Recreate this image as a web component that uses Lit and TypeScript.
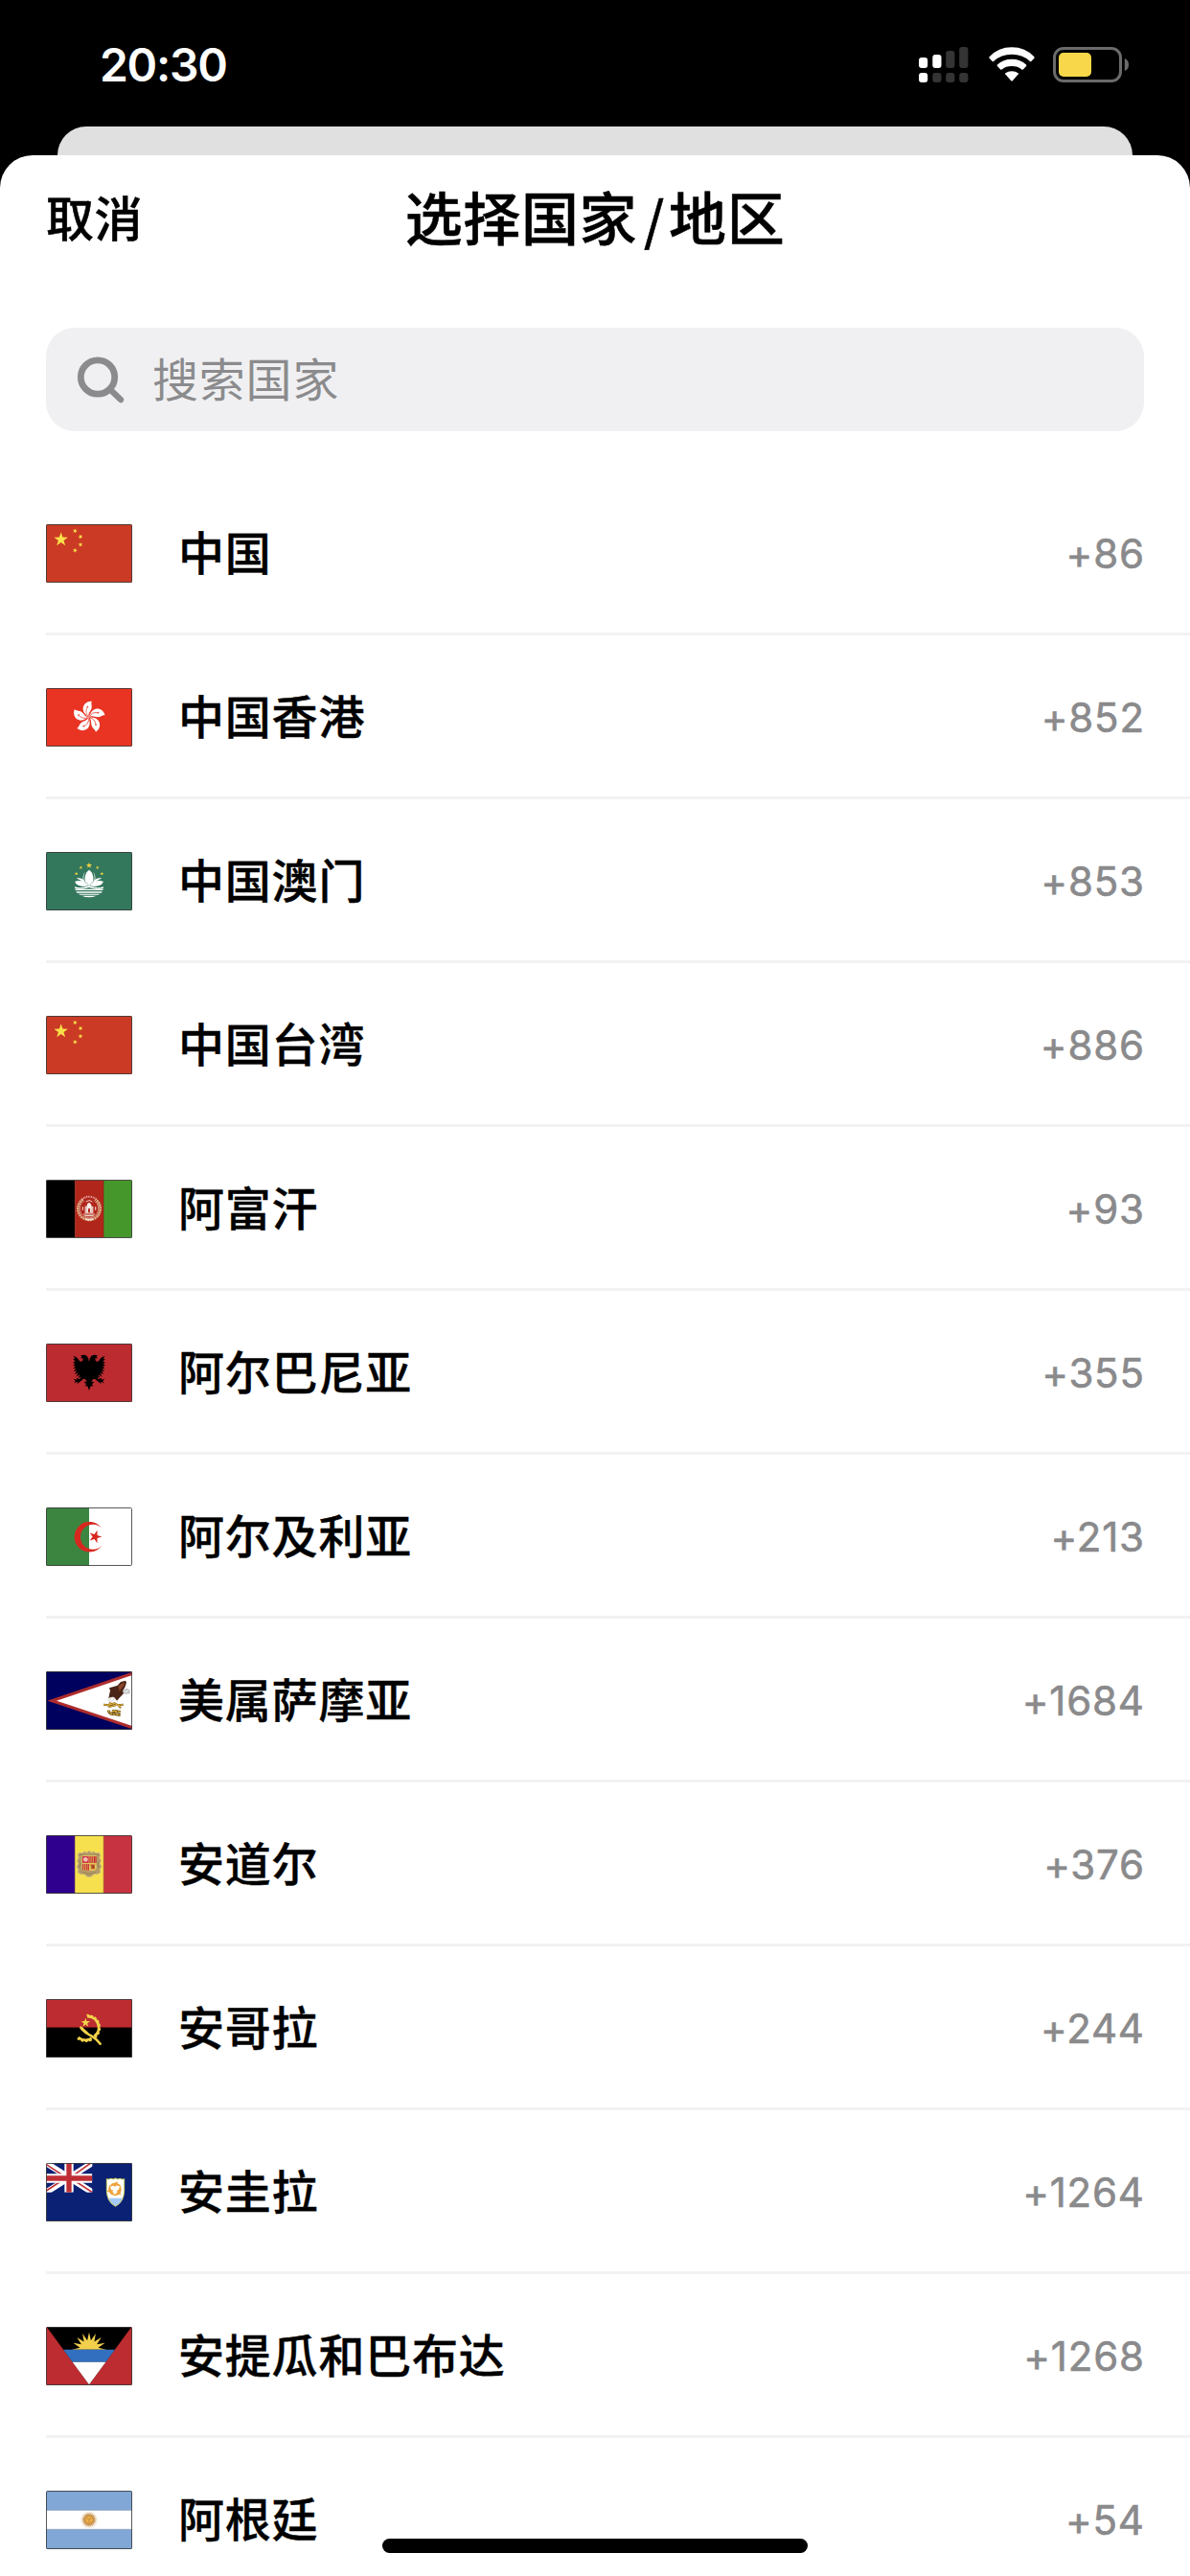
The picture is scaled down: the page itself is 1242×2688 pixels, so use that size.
import { LitElement, html, svg, css } from "lit";
import { customElement, property } from "lit/decorators.js";

type Country = { flag: string; name: string; code: string };

const COUNTRIES: Country[] = [
  { flag: "cn", name: "中国", code: "+86" },
  { flag: "hk", name: "中国香港", code: "+852" },
  { flag: "mo", name: "中国澳门", code: "+853" },
  { flag: "cn", name: "中国台湾", code: "+886" },
  { flag: "af", name: "阿富汗", code: "+93" },
  { flag: "al", name: "阿尔巴尼亚", code: "+355" },
  { flag: "dz", name: "阿尔及利亚", code: "+213" },
  { flag: "as", name: "美属萨摩亚", code: "+1684" },
  { flag: "ad", name: "安道尔", code: "+376" },
  { flag: "ao", name: "安哥拉", code: "+244" },
  { flag: "ai", name: "安圭拉", code: "+1264" },
  { flag: "ag", name: "安提瓜和巴布达", code: "+1268" },
  { flag: "ar", name: "阿根廷", code: "+54" },
];

/** Points of a regular star, first tip at `rot` degrees clockwise from up. */
function star(cx: number, cy: number, r: number, rot = 0, tips = 5, ratio = 0.385): string {
  const pts: string[] = [];
  for (let i = 0; i < tips * 2; i++) {
    const rad = i % 2 === 0 ? r : r * ratio;
    const a = ((rot + (i * 180) / tips - 90) * Math.PI) / 180;
    pts.push(`${(cx + rad * Math.cos(a)).toFixed(1)},${(cy + rad * Math.sin(a)).toFixed(1)}`);
  }
  return pts.join(" ");
}

const EAGLE_HALF =
  "0,60 3,46 8,38 16,35 27,37 23,41 28,46 20,46 20,53 27,57 33,52 37,45 50,38 45,47 51,49 44,55 51,60 44,63 51,69 43,71 50,79 41,78 49,88 39,85 46,97 35,91 41,104 30,97 34,109 26,103 30,112 40,107 38,113 50,110 43,117 48,124 37,119 38,126 29,119 18,110 12,112 8,119 17,120 9,127 14,133 6,133 0,146";

const HK_PETAL = "M0 0C-7-7-19-14-18-29C-16-42-5-51 10-50C5-44 12-37 8-26C5-17-3-13 0 0Z";

function artwork(id: string) {
  switch (id) {
    case "cn":
      return svg`
        <rect width="270" height="183" fill="#ca3a24"/>
        <g fill="#fae04a">
          <polygon points=${star(47, 48, 23)} />
          <polygon points=${star(91, 21, 8, 20)} />
          <polygon points=${star(108, 39, 8, 45)} />
          <polygon points=${star(108, 64, 8, 0)} />
          <polygon points=${star(91, 82, 8, 20)} />
        </g>`;
    case "hk":
      return svg`
        <rect width="270" height="183" fill="#e93323"/>
        <g transform="translate(134 91)">
          ${[0, 72, 144, 216, 288].map(
            (a) => svg`<g transform="rotate(${a})">
              <path d=${HK_PETAL} fill="#fff"/>
              <path d="M-1-3C-9-10-10-20-5-30" fill="none" stroke="#e93323" stroke-width="2"/>
              <polygon points=${star(-4, -32, 4.5)} fill="#e93323"/>
            </g>`
          )}
        </g>`;
    case "mo":
      return svg`
        <rect width="270" height="183" fill="#33775d"/>
        <g fill="#f3d543">
          <polygon points=${star(135, 42, 10)} />
          <polygon points=${star(109, 49, 6)} />
          <polygon points=${star(161, 49, 6)} />
          <polygon points=${star(95, 68, 6)} />
          <polygon points=${star(175, 68, 6)} />
        </g>
        <g fill="#fff">
          <path d="M135 56C122 65 121 80 122 92L135 106L148 92C149 80 148 65 135 56Z"/>
          <path d="M122 62C117 72 117 84 120 96L131 104C116 100 110 78 122 62Z"/>
          <path d="M148 62C153 72 153 84 150 96L139 104C154 100 160 78 148 62Z"/>
          <path d="M95 83C107 80 117 84 123 95L132 105C116 96 110 86 95 83Z"/>
          <path d="M175 83C163 80 153 84 147 95L138 105C154 96 160 86 175 83Z"/>
          <path d="M90 93C104 86 120 90 133 105C114 111 97 107 90 93Z"/>
          <path d="M180 93C166 86 150 90 137 105C156 111 173 107 180 93Z"/>
          <path d="M91 109C104 114 118 112 135 105C152 112 166 114 179 109L180 114Q160 119 135 111Q110 119 90 114Z"/>
          <path d="M91 116H179L178 120H92ZM94 124H176L174 128H97ZM102 131H168L164 134.500H106ZM112 137H158Q147 142 135 142Q122 142 112 137Z"/>
        </g>`;
    case "af":
      return svg`
        <rect width="91" height="183" fill="#000"/>
        <rect x="91" width="89" height="183" fill="#b1261b"/>
        <rect x="180" width="90" height="183" fill="#45972b"/>
        <path d="M91 0V183M180 0V183" stroke="#8c1e14" stroke-width="2"/>
        <g transform="translate(135 91)" fill="none">
          <path d="M-20-29A35 35 0 1 0 20-29" stroke="#dfb188" stroke-width="8" stroke-dasharray="6 1.500"/>
          <path d="M-16-25A29 29 0 1 0 16-25" stroke="#f5e6da" stroke-width="2.500" stroke-dasharray="4 2"/>
          <path d="M-22-30Q0-46 22-30" stroke="#e9a6a0" stroke-width="6" stroke-dasharray="3 2"/>
          <path d="M-10-22Q0-31 10-22" stroke="#f0c5c0" stroke-width="3"/>
          <path d="M-13 13V-8H-8Q-7-17 0-20Q7-17 8-8H13V13Z" fill="#f6eae6"/>
          <path d="M-3 12V1Q0-4 3 1V12Z" fill="#b1261b"/>
          <path d="M-9-7V11M9-7V11" stroke="#b1261b" stroke-width="1.200"/>
          <path d="M-20-6V4M20-6V4M-18 17H18M-14 22H14" stroke="#efd0bd" stroke-width="3.500"/>
          <path d="M-12 31Q0 37 12 31" stroke="#f5e6da" stroke-width="5"/>
        </g>
        <path d="M0 .8H270M0 182.200H270" stroke="#ddd" stroke-width="2.500"/>`;
    case "al":
      return svg`
        <rect width="270" height="183" fill="#bb2b30"/>
        <polygon points=${EAGLE_HALF} transform="translate(134.500 0)"/>
        <polygon points=${EAGLE_HALF} transform="translate(135.500 0) scale(-1 1)"/>`;
    case "dz":
      return svg`
        <rect width="270" height="183" fill="#fff"/>
        <rect width="135" height="183" fill="#3c8541"/>
        <path d="M175 65A47.300 47.300 0 1 0 175 119A39 39 0 1 1 175 65Z" fill="#d7281f"/>
        <polygon points=${star(154, 91.5, 21, 90)} fill="#d7281f"/>`;
    case "as":
      return svg`
        <rect width="270" height="183" fill="#00005e"/>
        <path d="M4 92L270 2V181Z" fill="#ad2c2c"/>
        <path d="M33 92L270 12V171Z" fill="#fff"/>
        <path d="M196 84L201 60L198 52L212 48L224 44L234 33L249 29L252 35L247 50L241 59L247 64L240 73L231 82L222 92L216 84L209 81Z" fill="#4a2418"/>
        <path d="M226 46L246 33L243 46L230 62Z" fill="#8a4529"/>
        <path d="M240 61L254 55L262 61L261 68L248 70L241 66Z" fill="#ddd" stroke="#777" stroke-width="1.500"/>
        <path d="M198 83L209 80L216 83L210 91L204 98L197 94L195 89Z" fill="#f2f0ee" stroke="#aaa" stroke-width="1"/>
        <path d="M180 104L196 106L203 98M194 106L214 100L226 106L242 104M196 111L218 106M226 104L234 115" fill="none" stroke="#5a4210" stroke-width="6"/>
        <path d="M180 104L196 106L203 98M194 106L214 100L226 106L242 104M196 111L218 106M226 104L234 115" fill="none" stroke="#e3b23b" stroke-width="3.500"/>
        <path d="M195 122Q198 135 213 134L233 137M207 123L219 128M215 124L233 127" fill="none" stroke="#5a4210" stroke-width="8"/>
        <path d="M195 122Q198 135 213 134L233 137M207 123L219 128M215 124L233 127" fill="none" stroke="#e3b23b" stroke-width="4" stroke-dasharray="8 2"/>`;
    case "ad":
      return svg`
        <rect width="91" height="183" fill="#2f008e"/>
        <rect x="91" width="89" height="183" fill="#f6e04e"/>
        <rect x="180" width="90" height="183" fill="#c73340"/>
        <path d="M91 0V183M180 0V183" stroke="#b8902f" stroke-width="2"/>
        <path d="M104 55L115 57L120 51L128 55L135 49L142 55L150 51L155 57L166 55L170 63L167 70L172 80L168 88L173 98L168 108L170 117L160 122L150 121L144 128L135 131L126 128L120 121L110 122L100 117L102 108L97 98L102 88L98 80L103 70L100 63Z" fill="#b39a66" stroke="#c9b482" stroke-width="3" stroke-linejoin="round"/>
        <path d="M105 62Q114 60 119 58M165 62Q156 60 151 58M103 82L108 90L104 102M167 82L162 90L166 102M115 116Q135 126 155 116" fill="none" stroke="#927c4b" stroke-width="2.500"/>
        <path d="M112 64H158V103Q158 110 148 111H122Q112 110 112 103Z" fill="#e3c45c"/>
        <rect x="114" y="66" width="20" height="21" fill="#d2344f"/>
        <circle cx="124" cy="76" r="7" fill="#f0c3b0"/>
        <path d="M138 66V87M144.500 66V87M151 66V87M156 66V87" stroke="#c32d37" stroke-width="4"/>
        <path d="M116 90V109M122 90V110M128 90V110M133 90V110" stroke="#c32d37" stroke-width="3.500"/>
        <path d="M139 94H153M141 103H153" stroke="#c1552b" stroke-width="5"/>
        <path d="M147 96V101" stroke="#8f3b1c" stroke-width="9"/>`;
    case "ao":
      return svg`
        <rect width="270" height="183" fill="#000"/>
        <rect width="270" height="89" fill="#bc2c30"/>
        <path d="M0 89.500H270" stroke="#511" stroke-width="2"/>
        <g fill="none" stroke="#f3d24a">
          <path d="M129 54A35 35 0 0 1 151 117M143 123A38 38 0 0 1 101 120" stroke-width="8.500"/>
          <path d="M127 50A40 40 0 0 1 154 121M143 128A43 43 0 0 1 98 123" stroke-width="5" stroke-dasharray="8 5"/>
          <path d="M109 89Q120 103 143 116Q160 126 170 140" stroke-width="7.500" stroke-linecap="round"/>
          <path d="M110 90L128 107" stroke-width="9"/>
        </g>
        <polygon points=${star(124, 74, 15)} fill="#f6d64c"/>`;
    case "ai":
      return svg`
        <rect width="270" height="183" fill="#0b2174"/>
        <svg width="145" height="92" viewBox="0 0 145 92">
          <path d="M0 0L145 92M145 0L0 92" stroke="#fff" stroke-width="19"/>
          <path d="M0 4L64 46M0 88L60 48M145 -3L84 40M81 50L145 92" stroke="#c02e35" stroke-width="5"/>
          <path d="M72 0V92M0 48H145" stroke="#fff" stroke-width="28"/>
          <path d="M72 0V92M0 48H145" stroke="#c02e35" stroke-width="16"/>
        </svg>
        <path d="M190 50Q197 53 203 49Q210 53 217.500 48Q225 53 232 49Q238 53 245 50V88Q244 120 217.500 136Q191 120 190 88Z" fill="#fff"/>
        <path d="M193 110H242Q235 127 217.500 136Q200 127 193 110Z" fill="#a5c9fa"/>
        <path d="M190 50Q197 53 203 49Q210 53 217.500 48Q225 53 232 49Q238 53 245 50V88Q244 120 217.500 136Q191 120 190 88Z" fill="none" stroke="#c9cf5b" stroke-width="3"/>
        <g fill="#eda23b" transform="translate(216 82)">
          ${[0, 120, 240].map(
            (a) => svg`<path transform="rotate(${a})" d="M-16-8Q-12-21 1-20L7-25L8-18Q17-15 20-6Q10-12 2-11L2-6L-4-11Q-11-10-16-8Z"/>`
          )}
        </g>`;
    case "ag":
      return svg`
        <rect width="270" height="183" fill="#bc2c30"/>
        <path d="M2 0H268L135 181Z" fill="#000"/>
        <svg width="270" height="71" viewBox="0 0 270 71">
          <polygon points=${star(135, 71, 54, 0, 16, 0.54)} fill="#f2d04c"/>
        </svg>
        <path d="M54.200 71H215.800L187.200 110H82.800Z" fill="#3270bf"/>
        <path d="M82.800 110H187.200L135 181Z" fill="#fff"/>`;
    default:
      return svg`
        <rect width="270" height="183" fill="#80a7d5"/>
        <rect y="61" width="270" height="60" fill="#fff"/>
        <path d="M0 61H270M0 121H270" stroke="#849bb5" stroke-width="2"/>
        <polygon points=${star(135, 91, 28, 0, 24, 0.66)} fill="#e2c7a4"/>
        <polygon points=${star(135, 91, 21, 7, 16, 0.8)} fill="#d3a267"/>
        <circle cx="135" cy="91" r="13" fill="#eeb24a" stroke="#b07a3c" stroke-width="2.500"/>
        <path d="M128 87H133M137 87H142M131 97H139M135 88V93" stroke="#a06a2c" stroke-width="2"/>`;
  }
}

@customElement("country-flag")
class CountryFlag extends LitElement {
  @property() code = "";

  static styles = css`
    :host {
      display: block;
      flex: none;
      width: 90px;
      height: 61px;
    }
    .flag {
      display: block;
      width: 90px;
      height: 61px;
      border-radius: 1.5px;
    }
  `;

  render() {
    return html`<svg class="flag" viewBox="0 0 270 183" aria-hidden="true">
      ${artwork(this.code)}
      <rect x="1.500" y="1.500" width="267" height="180" rx="2" fill="none" stroke="#3c3c3c" stroke-opacity=".85" stroke-width="3" />
    </svg>`;
  }
}

@customElement("status-bar")
class StatusBar extends LitElement {
  static styles = css`
    :host {
      display: flex;
      justify-content: space-between;
      align-items: flex-start;
      box-sizing: border-box;
      height: 132px;
      padding: 49px 63px 0 104px;
      color: #fff;
    }
    .time {
      margin-top: -10px;
      font: 600 48px/58px Inter, "Liberation Sans", sans-serif;
      letter-spacing: -1.3px;
    }
    .icons {
      display: flex;
    }
    .icons svg {
      display: block;
    }
    .signal {
      margin-right: 21px;
    }
    .wifi {
      margin-right: 19px;
    }
  `;

  render() {
    return html`
      <div class="time">20:30</div>
      <div class="icons">
        <svg class="signal" width="52" height="37" viewBox="0 0 52 37">
          <g fill="#fff">
            <rect x="0" y="11" width="9.200" height="11" rx="3" />
            <rect x="14.300" y="8" width="9.200" height="14" rx="3" />
            <rect x="0" y="27" width="9.200" height="10" rx="3" />
          </g>
          <g fill="#343434">
            <rect x="28.200" y="4" width="9.200" height="18" rx="3" />
            <rect x="42.200" y="0" width="9.200" height="22" rx="3" />
            <rect x="14.300" y="27" width="9.200" height="10" rx="3" />
            <rect x="28.200" y="27" width="9.200" height="10" rx="3" />
            <rect x="42.200" y="27" width="9.200" height="10" rx="3" />
          </g>
        </svg>
        <svg class="wifi" width="48" height="37" viewBox="0 0 48 37">
          <g fill="#fff">
            <path d="M.6 10.200Q10 .3 24 .3Q38 .3 47.400 10.200Q48 11 47.400 11.700L44.300 14.900Q43.700 15.500 43 14.900Q35 7.800 24 7.800Q13 7.800 5 14.900Q4.300 15.500 3.700 14.900L.6 11.700Q0 11 .6 10.200Z" />
            <path d="M8.900 18.600Q15 12.700 24 12.700Q33 12.700 39.100 18.600Q39.700 19.300 39.100 20L35.800 23.400Q35.100 24 34.400 23.400Q30.300 20 24 20Q17.700 20 13.600 23.400Q12.900 24 12.200 23.400L8.900 20Q8.300 19.300 8.900 18.600Z" />
            <path d="M17.400 27.200Q20 25.200 24 25.200Q28 25.200 30.600 27.200Q31.300 27.900 30.700 28.600L24.800 35.200Q24 36 23.200 35.200L17.300 28.600Q16.700 27.900 17.400 27.200Z" />
          </g>
        </svg>
        <svg class="battery" width="80" height="37" viewBox="0 0 80 37">
          <rect x="1.500" y="1.500" width="69" height="34" rx="9.500" fill="none" stroke="#6b6b6b" stroke-width="3" />
          <rect x="6" y="6" width="34" height="25" rx="5" fill="#f8d74a" />
          <path d="M74.800 12Q79 13.500 79 18.500Q79 23.500 74.800 25Z" fill="#6b6b6b" />
        </svg>
      </div>
    `;
  }
}

@customElement("app-root")
class AppRoot extends LitElement {
  static styles = css`
    :host {
      display: block;
      position: relative;
      width: 1242px;
      height: 2688px;
      overflow: hidden;
      background: #000;
      color: #000;
      font-family: "Noto Sans CJK SC", "Noto Sans CJK TC", sans-serif;
    }
    .behind {
      height: 30px;
      margin: 0 60px;
      border-radius: 30px 30px 0 0;
      background: #e0e0e0;
    }
    .sheet {
      height: 2526px;
      overflow: hidden;
      border-radius: 34px 34px 0 0;
      background: #fff;
    }
    .header {
      display: grid;
      grid-template-columns: 1fr auto 1fr;
      align-items: center;
      box-sizing: border-box;
      height: 180px;
      padding: 0 48px 54px;
    }
    .cancel {
      font-size: 50px;
      font-weight: 500;
      line-height: 70px;
      letter-spacing: 0.5px;
      -webkit-text-stroke: 0.5px #000;
    }
    .title {
      margin: 0;
      font-size: 60px;
      font-weight: 500;
      line-height: 80px;
      letter-spacing: 0.6px;
      white-space: nowrap;
      -webkit-text-stroke: 0.5px #000;
    }
    .slash {
      display: inline-block;
      box-sizing: border-box;
      width: 33px;
      padding-left: 3px;
      font-size: 55px;
      line-height: 60px;
      text-align: center;
    }
    .search {
      display: flex;
      align-items: center;
      box-sizing: border-box;
      height: 108px;
      margin: 0 48px;
      padding-left: 31px;
      border-radius: 30px;
      background: #f0f0f2;
      color: #8b8b8d;
      font-size: 48px;
      letter-spacing: 0.8px;
    }
    .glass {
      display: block;
      margin-right: 29px;
    }
    .hint {
      padding-bottom: 6px;
      line-height: 64px;
    }
    .list {
      margin: 42px 0 0;
      padding: 0;
      list-style: none;
    }
    .row {
      display: flex;
      align-items: center;
      box-sizing: border-box;
      height: 171px;
      margin-left: 48px;
      padding: 3px 48px 0 0;
      border-bottom: 3px solid #f2f2f4;
    }
    .name {
      flex: 1;
      margin-left: 48px;
      padding-bottom: 7px;
      font-size: 48px;
      font-weight: 500;
      line-height: 64px;
      letter-spacing: 0.8px;
      -webkit-text-stroke: 0.4px #000;
    }
    .code {
      margin-right: -0.8px;
      color: #8a8a8c;
      font: 400 42px/50px Inter, "Liberation Sans", sans-serif;
      letter-spacing: 0.8px;
      -webkit-text-stroke: 0.6px #8a8a8c;
    }
    .home {
      position: absolute;
      left: 399px;
      top: 2649px;
      width: 444px;
      height: 15px;
      border-radius: 8px;
      background: #000;
    }
  `;

  render() {
    return html`
      <status-bar></status-bar>
      <div class="behind"></div>
      <main class="sheet">
        <header class="header">
          <span class="cancel">取消</span>
          <h1 class="title">选择国家<span class="slash">/</span>地区</h1>
        </header>
        <div class="search">
          <svg class="glass" width="51" height="51" viewBox="0 0 51 51">
            <g fill="none" stroke="#8b8b8d">
              <circle cx="23" cy="22.500" r="17.700" stroke-width="6.800" />
              <path d="M36 35.500L47 46" stroke-width="6.400" stroke-linecap="round" />
            </g>
          </svg>
          <span class="hint">搜索国家</span>
        </div>
        <ul class="list">
          ${COUNTRIES.map(
            (c) => html`<li class="row">
              <country-flag .code=${c.flag}></country-flag>
              <span class="name">${c.name}</span>
              <span class="code">${c.code}</span>
            </li>`
          )}
        </ul>
      </main>
      <div class="home"></div>
    `;
  }
}
